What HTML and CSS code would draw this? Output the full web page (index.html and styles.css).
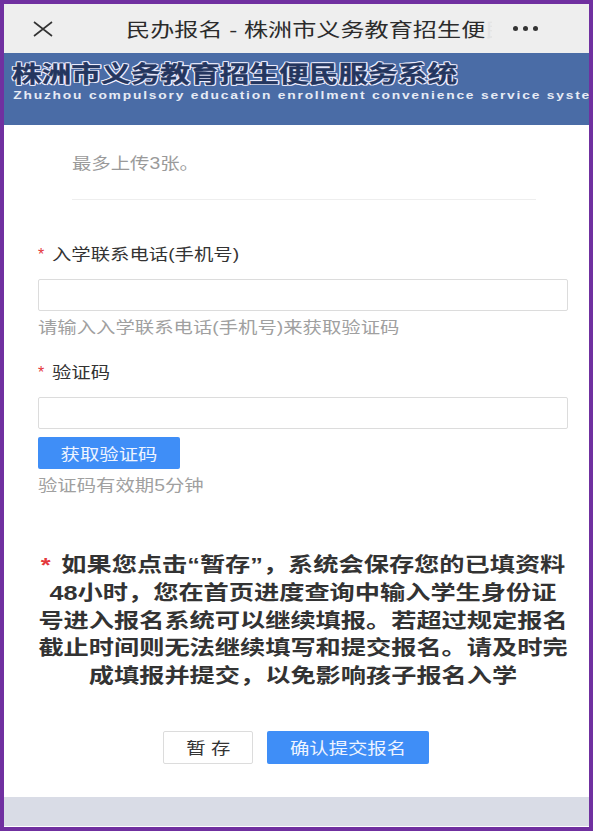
FILE: index.html
```html
<!DOCTYPE html>
<html lang="zh">
<head>
    <meta charset="UTF-8">
    <meta name="viewport" content="width=device-width, initial-scale=1.0">
    <title>民办报名</title>
    <link rel="stylesheet" href="styles.css">
</head>
<body>
    <div class="frame">
        <header class="topbar">
            <svg class="close-icon" viewBox="0 0 20 16" width="20" height="16">
                <path d="M1 1L19 15M19 1L1 15" stroke="#333" stroke-width="1.6" fill="none"/>
            </svg>
            <div class="topbar-title"><span>民办报名 - 株洲市义务教育招生便<em>民</em></span></div>
            <div class="more"><i></i><i></i><i></i></div>
        </header>
        <div class="banner">
            <div class="banner-title">株洲市义务教育招生便民服务系统</div>
            <div class="banner-sub">Zhuzhou compulsory education enrollment convenience service system</div>
        </div>
        <main class="content">
            <div class="upload-note">
                <p class="wide">最多上传3张。</p>
            </div>

            <div class="field first">
                <label><span class="star">*</span><span class="wide">入学联系电话(手机号)</span></label>
                <input type="text">
                <p class="hint wide">请输入入学联系电话(手机号)来获取验证码</p>
            </div>

            <div class="field second">
                <label><span class="star">*</span><span class="wide">验证码</span></label>
                <input type="text">
                <button class="btn blue code-btn"><span class="wide">获取验证码</span></button>
                <p class="hint wide">验证码有效期5分钟</p>
            </div>

            <p class="notice"><span class="star">*</span> 如果您点击“暂存”，系统会保存您的已填资料<br>48小时，您在首页进度查询中输入学生身份证<br>号进入报名系统可以继续填报。若超过规定报名<br>截止时间则无法继续填写和提交报名。请及时完<br>成填报并提交，以免影响孩子报名入学</p>

            <div class="actions">
                <button class="btn save"><span class="wide">暂 存</span></button>
                <button class="btn blue submit"><span class="wide">确认提交报名</span></button>
            </div>
        </main>
        <div class="bottom"></div>
    </div>
</body>
</html>
```

FILE: styles.css
```css
* {
    box-sizing: border-box;
}

html, body {
    margin: 0;
    padding: 0;
}

body {
    width: 593px;
    height: 831px;
    overflow: hidden;
    font-family: "Liberation Sans", "Noto Sans CJK SC", sans-serif;
    background-color: #fff;
}

.frame {
    width: 593px;
    height: 831px;
    border: 4px solid #7030a0;
    display: flex;
    flex-direction: column;
    overflow: hidden;
}

/* the screenshot is stretched sideways, so the text is too */
.wide {
    display: inline-block;
    transform: scaleX(1.21);
    transform-origin: left center;
}

.topbar {
    height: 49px;
    flex: none;
    background-color: #eeeeee;
    display: flex;
    align-items: center;
    padding-left: 29px;
}

.close-icon {
    flex: none;
}

.topbar-title {
    margin-left: 73px;
    width: 366px;
    overflow: hidden;
    white-space: nowrap;
    font-size: 19px;
    color: #2b2b2b;
}

.topbar-title span {
    display: inline-block;
    transform: scaleX(1.27);
    transform-origin: left center;
}

.topbar-title em {
    font-style: normal;
    color: #e4e4e4;
}

.more {
    margin-left: 21px;
    display: flex;
    gap: 5px;
}

.more i {
    width: 5px;
    height: 5px;
    border-radius: 50%;
    background-color: #333;
}

.banner {
    height: 72px;
    flex: none;
    background-color: #4a6ca6;
    padding: 6px 0 0 8px;
    overflow: hidden;
    white-space: nowrap;
}

.banner-title {
    font-size: 23px;
    line-height: 30px;
    font-weight: 700;
    color: #24365f;
    transform: scaleX(1.29);
    transform-origin: left center;
    -webkit-text-stroke: 0.4px #24365f;
    text-shadow: 1px 0 0 #eef, -1px 0 0 #eef, 0 1px 0 #eef, 0 -1px 0 #eef, 1px 1px 0 #eef, -1px -1px 0 #eef, 1px -1px 0 #eef, -1px 1px 0 #eef;
}

.banner-sub {
    margin-top: -1px;
    padding-left: 1px;
    font-size: 11.5px;
    line-height: 14px;
    font-weight: 700;
    letter-spacing: 1.5px;
    color: #e6ebf5;
    transform: scaleX(1.2);
    transform-origin: left center;
}

.content {
    flex: 1;
    padding: 0 21px 0 34px;
    color: #333;
}

.upload-note {
    margin: 0 32px 0 34px;
    height: 75px;
    padding-top: 29px;
    border-bottom: 1px solid #eeeeee;
}

.upload-note p {
    margin: 0;
    font-size: 16px;
    line-height: 20px;
    color: #9a9a9a;
}

.field label {
    display: block;
    font-size: 16px;
    line-height: 20px;
    color: #333;
}

.star {
    color: #e4393c;
    margin-right: 8px;
}

.field input {
    display: block;
    width: 530px;
    height: 32px;
    margin-top: 14px;
    border: 1px solid #dcdcdc;
    border-radius: 2px;
    background-color: #fff;
}

.hint {
    display: block;
    margin: 7px 0 0;
    font-size: 16px;
    line-height: 20px;
    color: #a0a0a0;
}

.field.first {
    margin-top: 45px;
}

.field.second {
    margin-top: 25px;
}

.btn {
    font-family: inherit;
    font-size: 16px;
    border-radius: 2px;
    padding: 0;
    cursor: pointer;
}

.btn .wide {
    transform-origin: center;
}

.btn.blue {
    background-color: #3f8ef7;
    border: none;
    color: #eef4ff;
}

.code-btn {
    display: block;
    width: 142px;
    height: 32px;
    margin-top: 8px;
}

.notice {
    width: 530px;
    margin: 56px 0 0;
    font-size: 20px;
    line-height: 27.8px;
    font-weight: 700;
    color: #333;
    text-align: center;
    white-space: nowrap;
    transform: scaleX(1.26);
}

.notice .star {
    color: #e4393c;
    margin: 0 3px 0 0;
}

.actions {
    margin-top: 40px;
    display: flex;
    justify-content: center;
    gap: 14px;
    padding-right: 14px;
}

.save {
    width: 90px;
    height: 33px;
    background-color: #fff;
    border: 1px solid #dcdcdc;
    color: #333;
}

.submit {
    width: 162px;
    height: 33px;
}

.bottom {
    height: 30px;
    flex: none;
    background-color: #d9dce6;
    border-bottom: 1px solid #fff;
}
```
